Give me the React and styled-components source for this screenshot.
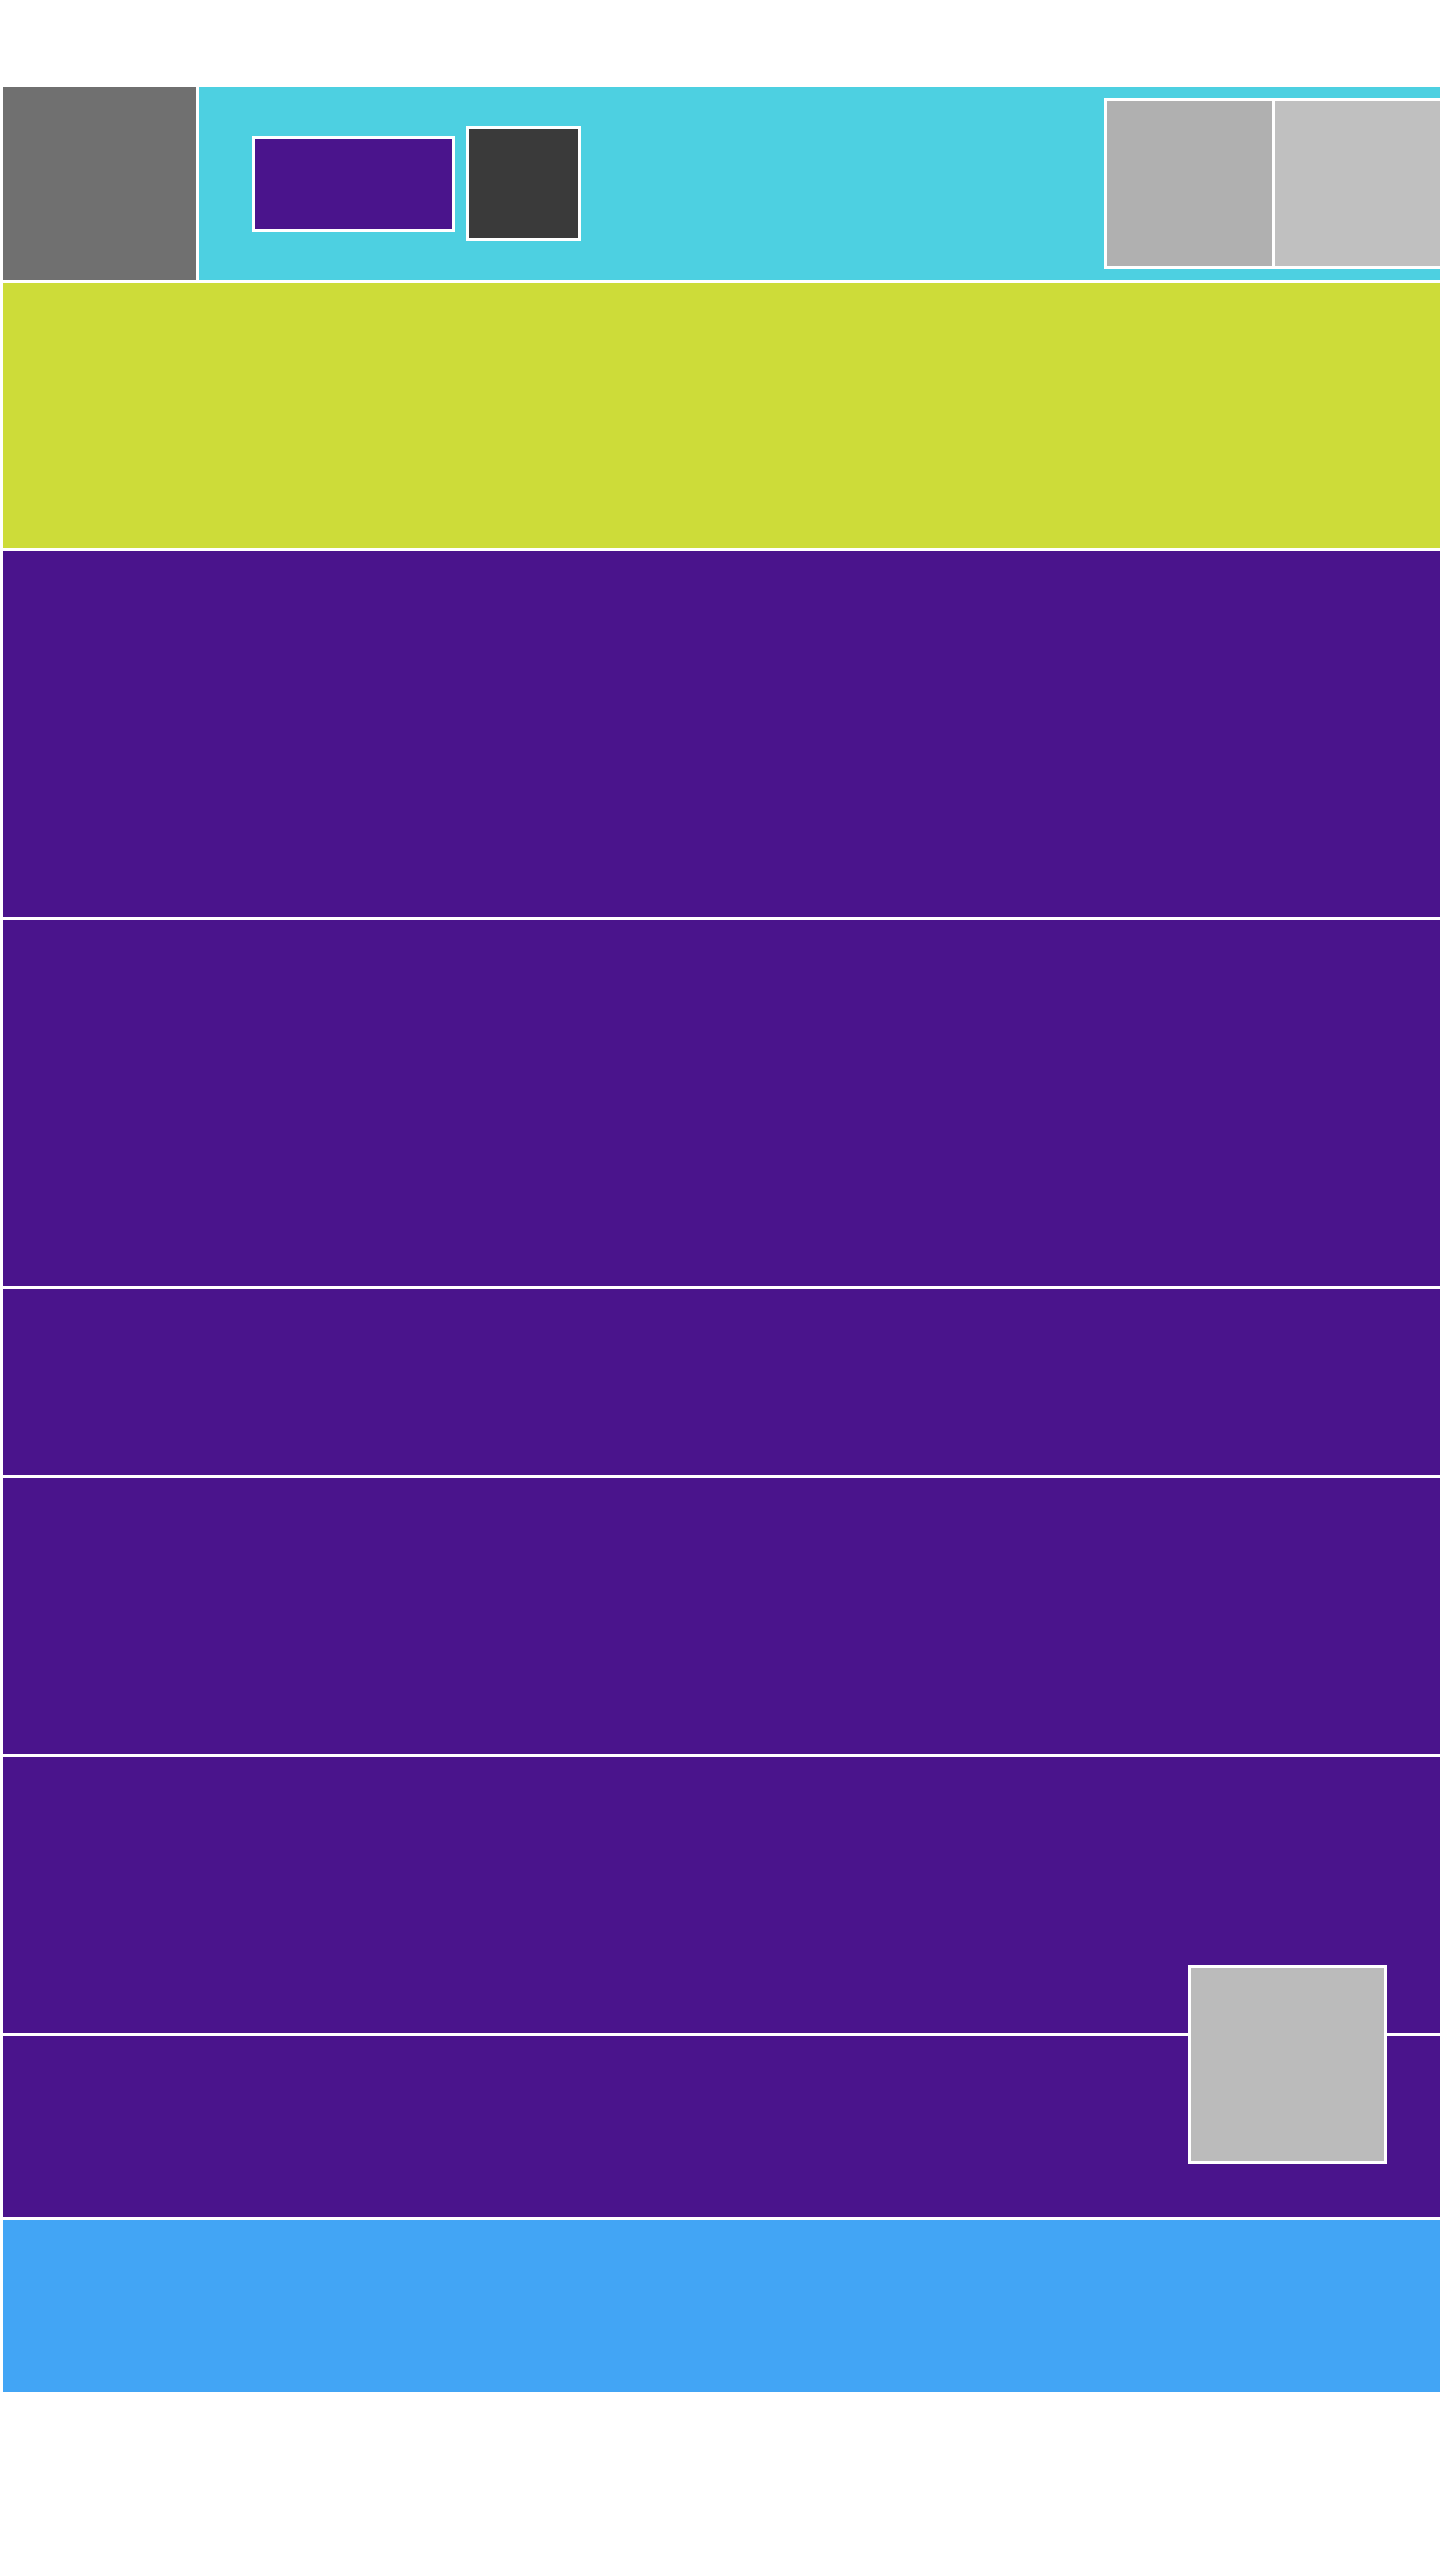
import React from "react";
import styled, { createGlobalStyle } from "styled-components";

const sections = [
   { id: "hero", height: 265, color: "#cddc39" },
   { id: "features", height: 366, color: "#4a148c" },
   { id: "gallery", height: 366, color: "#4a148c" },
   { id: "stats", height: 186, color: "#4a148c" },
   { id: "team", height: 276, color: "#4a148c" },
   { id: "pricing", height: 276, color: "#4a148c", floating: true },
   { id: "contact", height: 181, color: "#4a148c" },
];

const App = () => {
   return (
      <>
         <GlobalStyle />
         <Page>
            <Header>
               <Logo />
               <Bar>
                  <NavButton type="button" aria-label="menu" />
                  <IconButton type="button" aria-label="search" />
                  <Thumbs>
                     <Thumb tone="#b0b0b0" />
                     <Thumb tone="#c0c0c0" />
                  </Thumbs>
               </Bar>
            </Header>

            {sections.map((s) => (
               <Section key={s.id} height={s.height} color={s.color}>
                  {s.floating && <FloatingCard />}
               </Section>
            ))}

            <Footer />
         </Page>
      </>
   );
};

const GlobalStyle = createGlobalStyle`
   html, body {
      margin: 0;
      padding: 0;
      background: #ffffff;
      font-family: "Liberation Sans", Arial, sans-serif;
   }
`;

const Page = styled.div`
   display: flex;
   flex-direction: column;
   gap: 3px;
   padding: 87px 0 0 3px;
   overflow: hidden;
   background: #ffffff;
`;

const Header = styled.header`
   display: flex;
   gap: 3px;
   height: 193px;
`;

const Logo = styled.div`
   width: 193px;
   flex-shrink: 0;
   background: #707070;
`;

const Bar = styled.nav`
   flex: 1;
   display: flex;
   align-items: center;
   padding-left: 53px;
   background: #4dd0e1;
`;

const NavButton = styled.button`
   width: 203px;
   height: 96px;
   padding: 0;
   border: 3px solid #ffffff;
   background: #4a148c;
   cursor: pointer;
`;

const IconButton = styled.button`
   width: 115px;
   height: 115px;
   margin-left: 11px;
   padding: 0;
   border: 3px solid #ffffff;
   background: #3a3a3a;
   cursor: pointer;
`;

const Thumbs = styled.div`
   display: flex;
   gap: 3px;
   margin-left: auto;
   margin-right: -3px;
   flex-shrink: 0;
   height: 171px;
   box-sizing: border-box;
   border: 3px solid #ffffff;
   background: #ffffff;
`;

const Thumb = styled.div`
   width: 165px;
   background: ${(p) => p.tone};
`;

const Section = styled.section`
   position: relative;
   height: ${(p) => p.height}px;
   background: ${(p) => p.color};
`;

const FloatingCard = styled.div`
   position: absolute;
   top: 208px;
   right: 53px;
   width: 199px;
   height: 199px;
   box-sizing: border-box;
   border: 3px solid #ffffff;
   background: #bbbbbb;
   z-index: 2;
`;

const Footer = styled.footer`
   height: 172px;
   background: #42a5f5;
`;

export default App;
